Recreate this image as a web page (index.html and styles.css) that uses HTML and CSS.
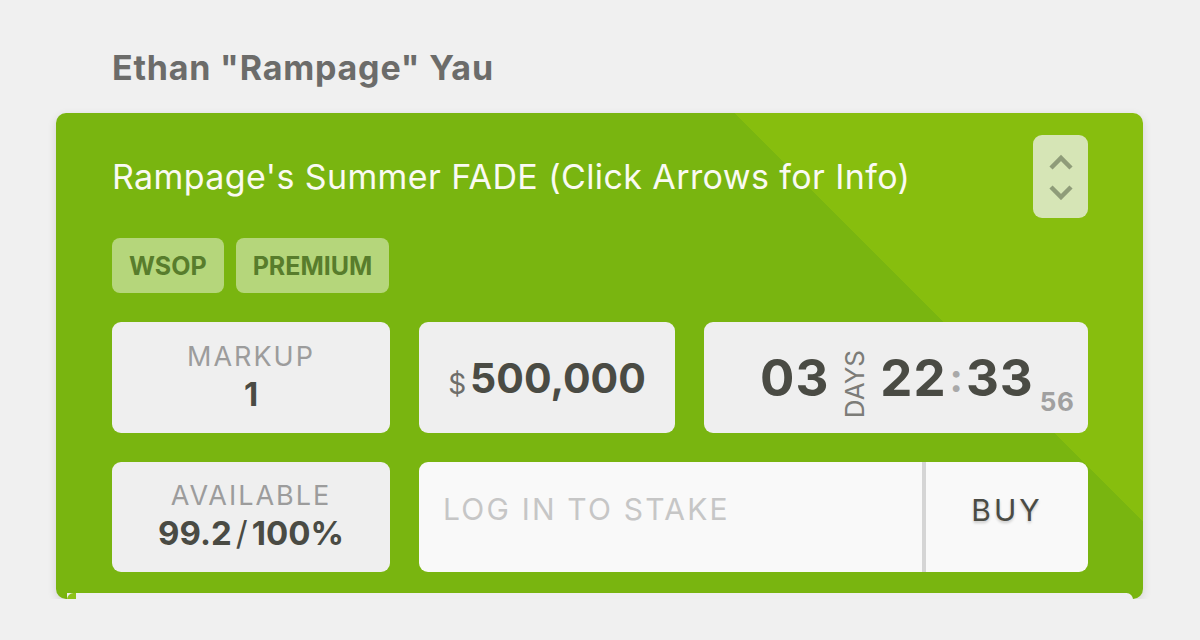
FILE: index.html
```html
<!DOCTYPE html>
<html lang="en">
<head>
    <meta charset="UTF-8">
    <meta name="viewport" content="width=device-width, initial-scale=1.0">
    <title>Rampage's Summer FADE</title>
    <link rel="stylesheet" href="styles.css">
</head>
<body>
    <div class="page">
        <h1 class="player">Ethan "Rampage" Yau</h1>

        <div class="card">
            <div class="card-head">
                <h2 class="package-title">Rampage's Summer FADE (Click Arrows for Info)</h2>
                <button class="toggle" type="button" aria-label="Show info">
                    <svg width="24" height="46" viewBox="0 0 24 46">
                        <path d="M2 14 L12 4 L22 14" fill="none" stroke="#8f9c79" stroke-width="4.5" />
                        <path d="M2 33 L12 43 L22 33" fill="none" stroke="#8f9c79" stroke-width="4.5" />
                    </svg>
                </button>
            </div>

            <div class="tags">
                <span class="tag">WSOP</span>
                <span class="tag">PREMIUM</span>
            </div>

            <div class="stats">
                <div class="box">
                    <span class="label">MARKUP</span>
                    <span class="value">1</span>
                </div>
                <div class="box price">
                    <span class="currency">$</span><span class="amount">500,000</span>
                </div>
                <div class="box timer">
                    <span class="big">03</span>
                    <span class="days">DAYS</span>
                    <span class="big">22</span><span class="colon">:</span><span class="big">33</span>
                    <span class="secs">56</span>
                </div>
                <div class="box">
                    <span class="label">AVAILABLE</span>
                    <span class="value">99.2<span class="slash">/</span>100%</span>
                </div>
                <form class="stake">
                    <input type="text" class="stake-input" placeholder="LOG IN TO STAKE" disabled>
                    <button type="button" class="buy">BUY</button>
                </form>
            </div>

            <div class="progress">
                <div class="progress-fill" style="width: 0.8%"></div>
            </div>
        </div>
    </div>
</body>
</html>
```

FILE: styles.css
```css
body {
    font-family: Inter, Lato, sans-serif;
    margin: 0;
    padding: 0;
    background-color: #f0f0f0;
}
.page {
    width: 1087px;
    margin-left: 56px;
    padding-top: 48px;
}
.player {
    margin: 0 0 25px 56px;
    font-size: 34px;
    line-height: 40px;
    font-weight: 700;
    letter-spacing: 0.8px;
    color: #6c6c6a;
}
.card {
    position: relative;
    padding: 22px 55px 27px 56px;
    border-radius: 10px;
    background: linear-gradient(45deg, #79b510 74%, #87be0e 74%);
    box-shadow: 0 3px 10px rgba(0, 0, 0, 0.12);
}
.card-head {
    display: flex;
    justify-content: space-between;
    align-items: center;
}
.package-title {
    margin: 0;
    font-size: 34px;
    font-weight: 400;
    letter-spacing: 0.4px;
    color: #fafaf2;
}
.toggle {
    width: 55px;
    height: 83px;
    padding: 0;
    border: none;
    border-radius: 9px;
    background-color: #d6e5b6;
    display: flex;
    align-items: center;
    justify-content: center;
    cursor: pointer;
}
.tags {
    display: flex;
    gap: 12px;
    margin-top: 20px;
}
.tag {
    height: 55px;
    padding: 0 17px;
    display: flex;
    align-items: center;
    border-radius: 8px;
    background-color: rgba(255, 255, 255, 0.45);
    color: #587d2c;
    font-size: 25px;
    font-weight: 700;
}
.stats {
    display: grid;
    grid-template-columns: 278px 256px 384px;
    grid-template-rows: 111px 110px;
    gap: 29px;
    margin-top: 29px;
}
.box {
    background-color: #efefef;
    border-radius: 9px;
    display: flex;
    flex-direction: column;
    align-items: center;
    justify-content: center;
    color: #4a4b44;
}
.label {
    font-size: 27px;
    line-height: 32px;
    letter-spacing: 2px;
    color: #9c9c9c;
}
.value {
    font-size: 33px;
    line-height: 42px;
    font-weight: 700;
}
.slash {
    font-weight: 400;
    margin: 0 4px;
}
.price {
    flex-direction: row;
}
.currency {
    font-size: 28px;
    color: #6e6e6a;
    margin-right: 4px;
    margin-top: 12px;
}
.amount {
    font-size: 41px;
    font-weight: 700;
}
.timer {
    flex-direction: row;
    padding-left: 56px;
    justify-content: flex-start;
}
.big {
    font-size: 51px;
    font-weight: 700;
    letter-spacing: 1px;
}
.days {
    writing-mode: vertical-rl;
    transform: rotate(180deg);
    font-size: 26px;
    color: #7c7c78;
    margin: 14px 10px 0 10px;
}
.colon {
    font-size: 40px;
    font-weight: 700;
    color: #a9a9a9;
    margin: 0 3px;
}
.secs {
    align-self: flex-end;
    margin: 0 0 16px 6px;
    font-size: 26px;
    font-weight: 700;
    letter-spacing: 0.5px;
    color: #a0a0a0;
}
.stake {
    grid-column: 2 / 4;
    display: flex;
    margin: 0;
    border-radius: 9px;
    overflow: hidden;
}
.stake-input {
    flex: 1;
    min-width: 0;
    margin: 0;
    padding: 0 24px 16px;
    border: none;
    border-right: 4px solid #d5d5d5;
    background-color: #f9f9f9;
    font-family: inherit;
    font-size: 30px;
    letter-spacing: 2.2px;
}
.stake-input::placeholder {
    color: #c6c6c6;
}
.buy {
    width: 162px;
    padding-bottom: 16px;
    border: none;
    background-color: #f9f9f9;
    font-family: inherit;
    font-size: 30px;
    letter-spacing: 3px;
    color: #4a4b44;
    text-shadow: 0 2px 3px rgba(0, 0, 0, 0.2);
    cursor: pointer;
}
.progress {
    position: absolute;
    left: 11px;
    right: 10px;
    bottom: -7px;
    height: 13px;
    border-radius: 0 7px 7px 7px;
    background-color: #efefef;
    box-shadow: 0 3px 4px rgba(0, 0, 0, 0.12);
    overflow: hidden;
}
.progress-fill {
    height: 100%;
    border-radius: 7px 0 0 7px;
    background-color: #8dc21a;
}
```
